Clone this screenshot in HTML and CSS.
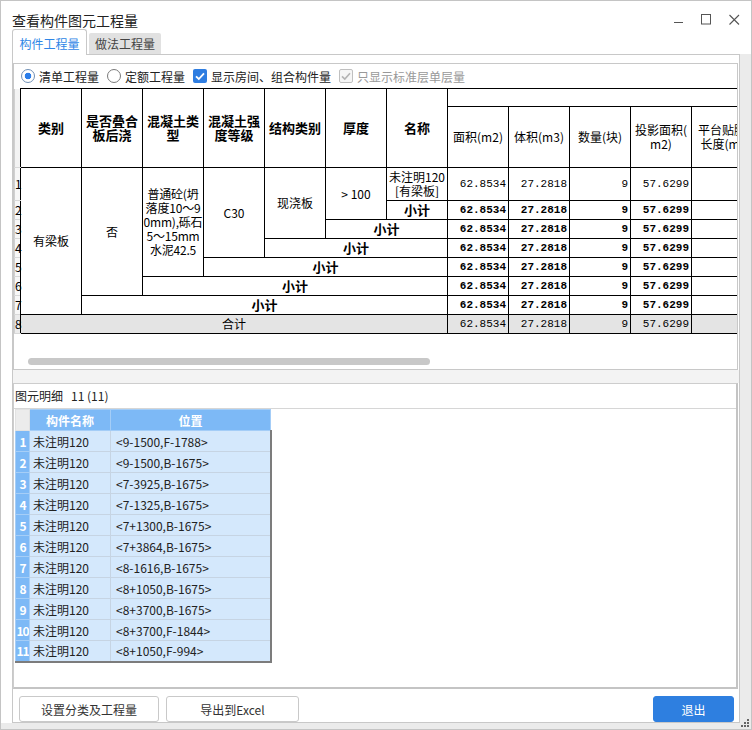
FILE: index.html
```html
<!DOCTYPE html>
<html lang="zh-CN">
<head>
<meta charset="utf-8">
<title>查看构件图元工程量</title>
<link rel="stylesheet" href="styles.css">
</head>
<body>
<div class="window">
  <div class="titlebar">
    <span class="title">查看构件图元工程量</span>
    <div class="controls">
      <svg width="12" height="12" viewBox="0 0 12 12"><path d="M2 9.5H11" stroke="#555" stroke-width="1" fill="none"/></svg>
      <svg width="12" height="12" viewBox="0 0 12 12"><rect x="1.5" y="1.5" width="9" height="9.5" stroke="#555" stroke-width="1" fill="none"/></svg>
      <svg width="12" height="12" viewBox="0 0 12 12"><path d="M1.5 2L11 11.5M11 2L1.5 11.5" stroke="#555" stroke-width="1.1" fill="none"/></svg>
    </div>
  </div>
  <div class="tabs">
    <div class="tab active">构件工程量</div>
    <div class="tab">做法工程量</div>
  </div>
  <div class="main">
    <div class="pane">
      <div class="upper">
        <div class="options">
          <label class="opt"><span class="radio on"></span>清单工程量</label>
          <label class="opt"><span class="radio"></span>定额工程量</label>
          <label class="opt"><span class="check on"><svg width="14" height="14" viewBox="0 0 14 14"><path d="M3 7.3L5.8 10L11 4.3" stroke="#fff" stroke-width="1.8" fill="none"/></svg></span>显示房间、组合构件量</label>
          <label class="opt dis"><span class="check off"><svg width="14" height="14" viewBox="0 0 14 14"><path d="M3 7.3L5.8 10L11 4.3" stroke="#b4b4b4" stroke-width="1.6" fill="none"/></svg></span>只显示标准层单层量</label>
        </div>
        <table class="qty">
          <colgroup>
            <col class="c-rn">
            <col class="c"><col class="c"><col class="c"><col class="c"><col class="c"><col class="c">
            <col class="c"><col class="c"><col class="c"><col class="c"><col class="c"><col class="c">
          </colgroup>
          <thead>
            <tr class="hA">
              <th class="rn" rowspan="2"></th>
              <th class="hb" rowspan="2">类别</th>
              <th class="hb" rowspan="2">是否叠合板后浇</th>
              <th class="hb" rowspan="2">混凝土类型</th>
              <th class="hb" rowspan="2">混凝土强度等级</th>
              <th class="hb" rowspan="2">结构类别</th>
              <th class="hb" rowspan="2">厚度</th>
              <th class="hb" rowspan="2">名称</th>
              <th colspan="5"></th>
            </tr>
            <tr class="hB">
              <th>面积(m2)</th>
              <th>体积(m3)</th>
              <th>数量(块)</th>
              <th class="lines">投影面积(
m2)</th>
              <th class="lines">平台贴脚
长度(m)</th>
            </tr>
          </thead>
          <tbody>
            <tr class="r1">
              <td class="rn">1</td>
              <td rowspan="7">有梁板</td>
              <td rowspan="6">否</td>
              <td rowspan="5" class="ctype lines">普通砼(坍
落度10～9
0mm),砾石
5～15mm
水泥42.5</td>
              <td rowspan="4">C30</td>
              <td rowspan="3">现浇板</td>
              <td rowspan="2">&gt; 100</td>
              <td class="name lines">未注明120
[有梁板]</td>
              <td class="num">62.8534</td><td class="num">27.2818</td><td class="num">9</td><td class="num">57.6299</td><td></td>
            </tr>
            <tr class="sub">
              <td class="rn">2</td>
              <td class="st">小计</td>
              <td class="num">62.8534</td><td class="num">27.2818</td><td class="num">9</td><td class="num">57.6299</td><td></td>
            </tr>
            <tr class="sub">
              <td class="rn">3</td>
              <td class="st" colspan="2">小计</td>
              <td class="num">62.8534</td><td class="num">27.2818</td><td class="num">9</td><td class="num">57.6299</td><td></td>
            </tr>
            <tr class="sub">
              <td class="rn">4</td>
              <td class="st" colspan="3">小计</td>
              <td class="num">62.8534</td><td class="num">27.2818</td><td class="num">9</td><td class="num">57.6299</td><td></td>
            </tr>
            <tr class="sub">
              <td class="rn">5</td>
              <td class="st" colspan="4">小计</td>
              <td class="num">62.8534</td><td class="num">27.2818</td><td class="num">9</td><td class="num">57.6299</td><td></td>
            </tr>
            <tr class="sub">
              <td class="rn">6</td>
              <td class="st" colspan="5">小计</td>
              <td class="num">62.8534</td><td class="num">27.2818</td><td class="num">9</td><td class="num">57.6299</td><td></td>
            </tr>
            <tr class="sub">
              <td class="rn">7</td>
              <td class="st" colspan="6">小计</td>
              <td class="num">62.8534</td><td class="num">27.2818</td><td class="num">9</td><td class="num">57.6299</td><td></td>
            </tr>
            <tr class="total">
              <td class="rn">8</td>
              <td colspan="7">合计</td>
              <td class="num">62.8534</td><td class="num">27.2818</td><td class="num">9</td><td class="num">57.6299</td><td></td>
            </tr>
          </tbody>
        </table>
        <div class="hscroll"></div>
      </div>
      <div class="splitter"></div>
      <div class="lower">
        <div class="lower-label">图元明细<span class="cnt">11 (11)</span></div>
        <table class="list">
          <colgroup><col class="l-rn"><col class="l-name"><col class="l-pos"></colgroup>
          <thead>
            <tr><th class="corner"></th><th>构件名称</th><th>位置</th></tr>
          </thead>
          <tbody>
            <tr><td class="rn">1</td><td>未注明120</td><td class="pos">&lt;9-1500,F-1788&gt;</td></tr>
            <tr><td class="rn">2</td><td>未注明120</td><td class="pos">&lt;9-1500,B-1675&gt;</td></tr>
            <tr><td class="rn">3</td><td>未注明120</td><td class="pos">&lt;7-3925,B-1675&gt;</td></tr>
            <tr><td class="rn">4</td><td>未注明120</td><td class="pos">&lt;7-1325,B-1675&gt;</td></tr>
            <tr><td class="rn">5</td><td>未注明120</td><td class="pos">&lt;7+1300,B-1675&gt;</td></tr>
            <tr><td class="rn">6</td><td>未注明120</td><td class="pos">&lt;7+3864,B-1675&gt;</td></tr>
            <tr><td class="rn">7</td><td>未注明120</td><td class="pos">&lt;8-1616,B-1675&gt;</td></tr>
            <tr><td class="rn">8</td><td>未注明120</td><td class="pos">&lt;8+1050,B-1675&gt;</td></tr>
            <tr><td class="rn">9</td><td>未注明120</td><td class="pos">&lt;8+3700,B-1675&gt;</td></tr>
            <tr><td class="rn">10</td><td>未注明120</td><td class="pos">&lt;8+3700,F-1844&gt;</td></tr>
            <tr><td class="rn">11</td><td>未注明120</td><td class="pos">&lt;8+1050,F-994&gt;</td></tr>
          </tbody>
        </table>
      </div>
      <div class="buttons">
        <button class="btn set">设置分类及工程量</button>
        <button class="btn export">导出到Excel</button>
        <button class="btn exit">退出</button>
      </div>
    </div>
    <div class="strip"></div>
  </div>
  <div class="bottom-strip"></div>
  <svg class="grip" width="10" height="10" viewBox="0 0 10 10">
    <rect x="7" y="1" width="2" height="2" fill="#666"/>
    <rect x="4" y="4" width="2" height="2" fill="#666"/>
    <rect x="7" y="4" width="2" height="2" fill="#666"/>
    <rect x="1" y="7" width="2" height="2" fill="#666"/>
    <rect x="4" y="7" width="2" height="2" fill="#666"/>
    <rect x="7" y="7" width="2" height="2" fill="#666"/>
  </svg>
</div>
</body>
</html>
```
FILE: styles.css
```css
* { box-sizing: border-box; }
html, body { margin: 0; padding: 0; background: #fff; }
body {
  font-family: "Noto Sans CJK SC", "Noto Sans", sans-serif;
  font-size: 12px;
  color: #222;
}
.window {
  position: relative;
  width: 752px;
  height: 730px;
  border: 1px solid #c4c4c4;
  display: flex;
  flex-direction: column;
  background: #fff;
  overflow: hidden;
}
.titlebar {
  height: 28px;
  flex: none;
  display: flex;
  justify-content: space-between;
  align-items: flex-start;
  padding: 0 11px;
}
.title {
  font-size: 14px;
  line-height: 20px;
  margin-top: 9px;
  color: #222;
}
.controls {
  display: flex;
  gap: 16px;
  margin-top: 12px;
}
.controls svg { display: block; }
.tabs {
  height: 25px;
  flex: none;
  display: flex;
  align-items: flex-end;
  padding-left: 11px;
}
.tab {
  height: 21px;
  width: 72px;
  margin-left: 2px;
  background: #e1e1e1;
  color: #444;
  display: flex;
  align-items: center;
  justify-content: center;
  border-radius: 2px 2px 0 0;
}
.tab.active {
  height: 26px;
  width: 75px;
  margin-left: 0;
  margin-bottom: -1px;
  padding-top: 1px;
  background: #fff;
  color: #2f86e6;
  border: 1px solid #c8c8c8;
  border-bottom: none;
  border-radius: 3px 3px 0 0;
  position: relative;
  z-index: 1;
}
.main {
  flex: 1;
  display: flex;
  min-height: 0;
}
.pane {
  width: 728px;
  margin-left: 11px;
  border: 1px solid #c8c8c8;
  padding-top: 8px;
  display: flex;
  flex-direction: column;
}
.strip { flex: 1; background: #ebebeb; }
.bottom-strip { height: 6px; flex: none; background: #ebebeb; }
.grip { position: absolute; right: 1px; bottom: 1px; }

/* upper panel */
.upper {
  height: 307px;
  flex: none;
  margin-right: 1px;
  border: 1px solid #c8c8c8;
  overflow: hidden;
}
.options {
  height: 24px;
  display: flex;
  align-items: center;
  padding-left: 7px;
  color: #222;
}
.opt {
  display: flex;
  align-items: center;
  gap: 4px;
  margin-right: 8px;
}
.opt.dis { color: #999; }
.radio {
  width: 14px;
  height: 14px;
  border: 1px solid #7a7a7a;
  border-radius: 50%;
  background: #fff;
}
.radio.on {
  border-color: #6f8fb5;
  background: radial-gradient(circle, #2b7de9 0 3px, #fff 3.6px);
}
.check {
  width: 14px;
  height: 14px;
  border-radius: 2px;
  display: flex;
}
.check svg { display: block; }
.check.on { background: #2e7de1; }
.check.off { background: #f6f6f6; border: 1px solid #c0c0c0; }
.check.off svg { margin: -1px; }

.qty {
  border-collapse: collapse;
  table-layout: fixed;
  width: 738px;
  font-size: 12px;
  color: #000;
}
.qty col.c-rn { width: 6px; }
.qty col.c { width: 61px; }
.qty th, .qty td {
  border: 1px solid #000;
  padding: 0 2px;
  text-align: center;
  vertical-align: middle;
  overflow: hidden;
  white-space: nowrap;
  line-height: 14px;
  background: #fff;
}
.qty th { font-weight: normal; }
.qty th.hb {
  font-weight: bold;
  font-size: 13px;
  white-space: normal;
}
.qty .lines { white-space: pre; }
.qty tr.hA { height: 18px; }
.qty tr.hB { height: 61px; }
.qty tr.r1 { height: 33px; }
.qty tr.sub, .qty tr.total { height: 19px; }
.qty .rn {
  border: none;
  border-bottom: 1px solid #d8d8d8;
  border-left: 1px solid #d0d0d0;
  padding: 0;
  font-size: 12px;
  background: #f7f7f7;
  overflow: visible;
}
.qty th.rn { background: #f3f3f3; }
.qty .ctype {
  padding: 0;
  line-height: 14px;
  letter-spacing: -0.2px;
}
.qty .name { padding: 0; }
.qty .num {
  font-family: "Liberation Mono", monospace;
  font-size: 11px;
  text-align: right;
  padding: 0 2px 0 0;
}
.qty tr.sub .num { font-weight: bold; }
.qty .st { font-weight: bold; font-size: 13px; }
.qty tr.total td { background: #e4e4e4; }
.qty tr.total td.rn { background: #ececec; }

.hscroll {
  width: 402px;
  height: 7px;
  margin: 24px 0 0 14px;
  background: #c8c8c8;
  border-radius: 4px;
}
.splitter {
  height: 13px;
  flex: none;
  background: #f3f3f3;
}

/* lower panel */
.lower {
  height: 306px;
  flex: none;
  margin-right: 1px;
  border: 1px solid #cdcdcd;
  border-right: 2px solid #c4c4c4;
  border-bottom: 2px solid #c4c4c4;
}
.lower-label {
  height: 25px;
  line-height: 24px;
  padding-left: 1px;
  border-bottom: 1px solid #d6d6d6;
  color: #222;
}
.cnt { margin-left: 8px; }
.list {
  border-collapse: collapse;
  table-layout: fixed;
  width: 255px;
  margin-left: 1px;
  font-size: 12px;
  color: #222;
}
.list col.l-rn { width: 14px; }
.list col.l-name { width: 81px; }
.list col.l-pos { width: 160px; }
.list th {
  height: 21px;
  padding: 0;
  background: #7db9f6;
  color: #fff;
  font-weight: bold;
  border: 1px solid #a4cdf7;
}
.list th.corner { background: #ececec; border-color: #e2e2e2; }
.list td {
  height: 21px;
  padding: 0 0 0 3px;
  background: #d4e8fc;
  border: 1px solid #c6d4e3;
  white-space: nowrap;
  overflow: hidden;
}
.list td.rn {
  padding: 0;
  text-align: center;
  background: #7db9f6;
  color: #fff;
  font-weight: bold;
  border-color: #a6cef7;
  letter-spacing: -1px;
}
.list td.pos {
  padding-left: 5px;
  border-right: 2px solid #7c7c7c;
}
.list tbody tr:last-child td { border-bottom: 2px solid #7c7c7c; }

/* buttons */
.buttons {
  flex: 1;
  display: flex;
  align-items: flex-end;
  padding: 0 5px 0 6px;
}
.btn {
  height: 26px;
  border: 1px solid #c9c9c9;
  border-radius: 3px;
  background: #fff;
  color: #333;
  font-family: "Noto Sans CJK SC", "Noto Sans", sans-serif;
  font-size: 12px;
  padding: 0;
}
.btn.set { width: 140px; }
.btn.export { width: 133px; margin-left: 7px; }
.btn.exit {
  width: 81px;
  margin-left: auto;
  background: #2e7fe0;
  border-color: #2e7fe0;
  color: #fff;
}
```
